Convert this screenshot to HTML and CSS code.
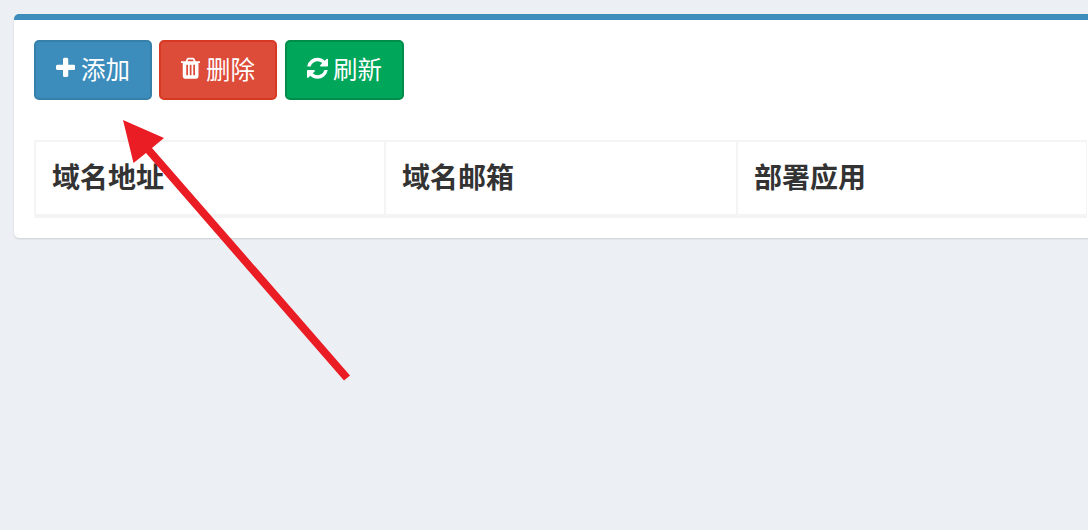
FILE: index.html
```html
<!DOCTYPE html>
<html lang="zh-CN">
<head>
<meta charset="utf-8">
<title>域名</title>
<link rel="stylesheet" href="styles.css">
</head>
<body>
<section class="box">
  <div class="toolbar">
    <button class="btn btn-blue" type="button">
      <svg class="icon icon-narrow" viewBox="192 0 1408 1792"><path d="M1600 736v192q0 40-28 68t-68 28h-416v416q0 40-28 68t-68 28h-192q-40 0-68-28t-28-68v-416h-416q-40 0-68-28t-28-68v-192q0-40 28-68t68-28h416v-416q0-40 28-68t68-28h192q40 0 68 28t28 68v416h416q40 0 68 28t28 68z"/></svg>
      <span>添加</span>
    </button>
    <button class="btn btn-red" type="button">
      <svg class="icon icon-narrow" viewBox="192 0 1408 1792"><path d="M704 1376v-704q0-14-9-23t-23-9h-64q-14 0-23 9t-9 23v704q0 14 9 23t23 9h64q14 0 23-9t9-23zm256 0v-704q0-14-9-23t-23-9h-64q-14 0-23 9t-9 23v704q0 14 9 23t23 9h64q14 0 23-9t9-23zm256 0v-704q0-14-9-23t-23-9h-64q-14 0-23 9t-9 23v704q0 14 9 23t23 9h64q14 0 23-9t9-23zm-544-992h448l-48-117q-7-9-17-11h-317q-10 2-17 11zm928 32v64q0 14-9 23t-23 9h-96v948q0 83-47 143.500t-113 60.500h-832q-66 0-113-58.500t-47-141.500v-952h-96q-14 0-23-9t-9-23v-64q0-14 9-23t23-9h309l70-167q15-37 54-63t79-26h320q40 0 79 26t54 63l70 167h309q14 0 23 9t9 23z"/></svg>
      <span>删除</span>
    </button>
    <button class="btn btn-green" type="button">
      <svg class="icon icon-wide" viewBox="128 0 1536 1792"><path d="M1639 1056q0 5-1 7-64 268-268 434.500t-478 166.500q-146 0-282.500-55t-243.500-157l-129 129q-19 19-45 19t-45-19-19-45v-448q0-26 19-45t45-19h448q26 0 45 19t19 45-19 45l-137 137q71 66 161 102t187 36q134 0 250-65t186-179q11-17 53-117 8-23 30-23h192q13 0 22.500 9.500t9.500 22.500zm25-800v448q0 26-19 45t-45 19h-448q-26 0-45-19t-19-45 19-45l138-138q-148-137-349-137-134 0-250 65t-186 179q-11 17-53 117-8 23-30 23h-199q-13 0-22.500-9.500t-9.500-22.500v-7q65-268 270-434.500t480-166.500q146 0 284 55.500t245 156.500l130-129q19-19 45-19t45 19 19 45z"/></svg>
      <span>刷新</span>
    </button>
  </div>
  <table class="grid">
    <thead>
      <tr>
        <th>域名地址</th>
        <th>域名邮箱</th>
        <th>部署应用</th>
      </tr>
    </thead>
  </table>
</section>
<svg class="arrow" viewBox="0 0 1088 530" aria-hidden="true">
  <polygon points="123,120 164,138 152,147.900 350,375.400 344,380.600 146,153.100 133.500,163"/>
</svg>
</body>
</html>
```

FILE: styles.css
```css
* {
  box-sizing: border-box;
}

html,
body {
  height: 100%;
}

body {
  margin: 0;
  padding: 14px 0 0 14px;
  overflow: hidden;
  position: relative;
  background: #ecf0f5;
  font-family: "Liberation Sans", "Noto Sans CJK SC", sans-serif;
  color: #333;
}

.box {
  width: 1110px;
  height: 224px;
  padding: 20px;
  background: #fff;
  border-top: 6px solid #3c8dbc;
  border-radius: 5px;
  box-shadow: 0 1px 2px rgba(0, 0, 0, 0.14);
}

.toolbar {
  display: flex;
  gap: 7px;
}

.btn {
  display: inline-flex;
  align-items: center;
  gap: 5.75px;
  height: 60px;
  padding: 0 20px 3px;
  border: 2px solid;
  border-radius: 5px;
  color: #fff;
  font: 400 24.5px "Noto Sans CJK SC", sans-serif;
}

.btn-blue {
  background: #3c8dbc;
  border-color: #367fa9;
}

.btn-red {
  background: #dd4b39;
  border-color: #d73925;
}

.btn-green {
  gap: 5px;
  margin-left: 1px;
  background: #00a65a;
  border-color: #008d4c;
}

.icon {
  height: 24.5px;
  fill: #fff;
  flex: none;
}

.icon-narrow {
  width: 19.25px;
}

.icon-wide {
  width: 21px;
}

.grid {
  width: 1053px;
  margin-top: 40px;
  table-layout: fixed;
  border-collapse: separate;
  border-spacing: 0;
}

.grid th {
  width: 352px;
  height: 78px;
  padding: 0 16px 4px;
  border: 2px solid #f4f4f4;
  border-left-width: 1px;
  border-right-width: 1px;
  border-bottom-width: 4px;
  text-align: left;
  font: 700 28px "Noto Sans CJK SC", sans-serif;
  color: #333;
}

.grid th:first-child {
  width: 351px;
  border-left-width: 2px;
}

.grid th:last-child {
  width: 350px;
}

.arrow {
  position: absolute;
  left: 0;
  top: 0;
  width: 1088px;
  height: 530px;
  fill: #ea1c24;
}
```
